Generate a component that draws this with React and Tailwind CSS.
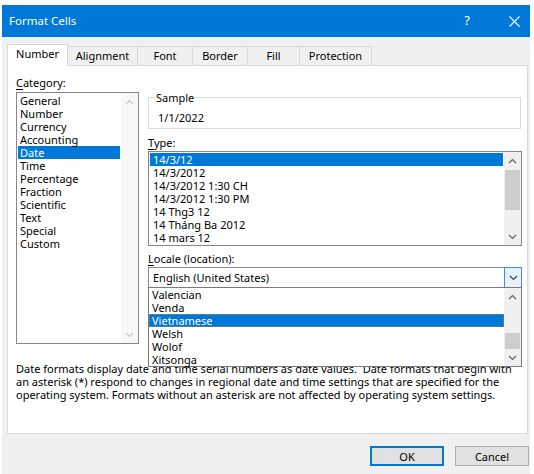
import React from "react";

function Chev({ dir = "up", color = "#606060" }) {
  return (
    <svg width="9" height="6" viewBox="0 0 9 6" className="block">
      <path
        d={dir === "up" ? "M1 5L4.5 1.5L8 5" : "M1 1L4.5 4.5L8 1"}
        fill="none"
        stroke={color}
        strokeWidth="1.2"
      />
    </svg>
  );
}

function ArrowBtn({ dir, color }) {
  return (
    <div className="h-[17px] flex items-center justify-center shrink-0">
      <Chev dir={dir} color={color} />
    </div>
  );
}

function Row({ children, selected, focus }) {
  return (
    <div
      className={
        "h-[13px] leading-[13px] pl-[3px] whitespace-nowrap " +
        (selected ? "bg-[#0078d7] text-white " : "") +
        (focus ? "outline-1 outline-dotted outline-[#b08040] -outline-offset-1" : "")
      }
    >
      {children}
    </div>
  );
}

const categories = [
  "General",
  "Number",
  "Currency",
  "Accounting",
  "Date",
  "Time",
  "Percentage",
  "Fraction",
  "Scientific",
  "Text",
  "Special",
  "Custom",
];

const types = [
  "14/3/12",
  "14/3/2012",
  "14/3/2012 1:30 CH",
  "14/3/2012 1:30 PM",
  "14 Thg3 12",
  "14 Tháng Ba 2012",
  "14 mars 12",
];

const locales = ["Valencian", "Venda", "Vietnamese", "Welsh", "Wolof", "Xitsonga"];

const tabs = [
  ["Alignment", "w-[70px]"],
  ["Font", "w-[55px]"],
  ["Border", "w-[55px]"],
  ["Fill", "w-[52px]"],
  ["Protection", "w-[72px]"],
];

export default function App() {
  return (
    <div className="w-[534px] h-[474px] bg-white pt-[5px] pl-[2px] overflow-hidden font-['Noto_Sans',sans-serif] text-[11px] text-black">
      <div className="w-[528px] h-[469px] bg-[#f0f0f0] flex flex-col">
        {/* Title bar */}
        <div className="h-[32px] bg-[#0078d7] flex items-center text-white shrink-0">
          <span className="pl-[7px] text-[11.5px] flex-1">Format Cells</span>
          <span className="w-[20px] text-center text-[13px] mr-[27px]">?</span>
          <span className="w-[20px] flex justify-center mr-[6px]">
            <svg width="11" height="11" viewBox="0 0 11 11">
              <path d="M0.5 0.5L10.5 10.5M10.5 0.5L0.5 10.5" stroke="white" strokeWidth="1.1" />
            </svg>
          </span>
        </div>

        {/* Tabs */}
        <div className="mt-[7px] pl-[5px] flex items-end h-[21px] shrink-0">
          <div className="relative z-10 h-[22px] -mb-px w-[61px] bg-white border border-b-0 border-[#d9d9d9] flex items-center justify-center pb-[2px]">
            Number
          </div>
          {tabs.map(([t, w]) => (
            <div
              key={t}
              className={
                w +
                " h-[19px] bg-[#f0f0f0] border-t border-r border-[#d9d9d9] flex items-center justify-center"
              }
            >
              {t}
            </div>
          ))}
        </div>

        {/* Panel */}
        <div className="ml-[5px] w-[521px] h-[369px] bg-white border border-[#d9d9d9] pt-[10px] pl-[8px] shrink-0">
          <div className="flex">
            {/* Left column */}
            <div className="w-[123px]">
              <div className="h-[13px] leading-[13px]">
                <span className="underline underline-offset-[2px]">C</span>ategory:
              </div>
              <div className="mt-[3px] h-[252px] border border-[#828790] flex">
                <div className="flex-1 p-px">
                  {categories.map((c) => (
                    <div
                      key={c}
                      className={
                        "h-[13px] leading-[13px] pl-[2px] " +
                        (c === "Date" ? "bg-[#0078d7] text-white" : "")
                      }
                    >
                      {c}
                    </div>
                  ))}
                </div>
                <div className="w-[17px] bg-[#f7f7f7] flex flex-col justify-between">
                  <ArrowBtn dir="up" color="#c8c8c8" />
                  <ArrowBtn dir="down" color="#c8c8c8" />
                </div>
              </div>
            </div>

            {/* Right column */}
            <div className="ml-[9px] w-[374px]">
              {/* Sample */}
              <div className="relative mt-[21px] h-[32px] w-[373px] border border-[#dcdcdc] pt-[13px] pl-[9px] leading-[13px]">
                <span className="absolute -top-[7px] left-[6px] bg-white px-[1px] leading-[13px]">
                  Sample
                </span>
                1/1/2022
              </div>

              {/* Type */}
              <div className="mt-[7px] h-[13px] leading-[13px]">
                <span className="underline underline-offset-[2px]">T</span>ype:
              </div>
              <div className="mt-[2px] h-[95px] border border-[#828790] flex">
                <div className="flex-1 p-px">
                  {types.map((t, i) => (
                    <Row key={t} selected={i === 0}>
                      {t}
                    </Row>
                  ))}
                </div>
                <div className="w-[17px] bg-[#f0f0f0] flex flex-col">
                  <ArrowBtn dir="up" />
                  <div className="flex-1 flex flex-col">
                    <div className="mt-[1px] h-[40px] mx-px bg-[#cdcdcd]" />
                  </div>
                  <ArrowBtn dir="down" />
                </div>
              </div>

              {/* Locale */}
              <div className="mt-[6px] h-[13px] leading-[13px]">
                <span className="underline underline-offset-[2px]">L</span>ocale (location):
              </div>
              <div className="relative mt-[2px]">
                <div className="h-[21px] border border-[#8c8c8c] flex items-stretch">
                  <div className="flex-1 pl-[4px] flex items-center leading-[13px]">
                    English (United States)
                  </div>
                  <div className="w-[18px] -my-px -mr-px bg-[#e5f1fb] border border-[#3c8ed6] flex items-center justify-center">
                    <Chev dir="down" color="#404040" />
                  </div>
                </div>
                {/* Dropdown list overlay */}
                <div className="absolute z-10 left-0 top-[20px] w-[374px] h-[80px] bg-white border border-[#7a7a7a] flex">
                  <div className="flex-1">
                    {locales.map((l) => (
                      <Row key={l} selected={l === "Vietnamese"} focus={l === "Vietnamese"}>
                        {l}
                      </Row>
                    ))}
                  </div>
                  <div className="w-[17px] bg-[#f0f0f0] flex flex-col">
                    <ArrowBtn dir="up" />
                    <div className="flex-1 flex flex-col justify-end">
                      <div className="h-[16px] mx-px bg-[#cdcdcd]" />
                    </div>
                    <ArrowBtn dir="down" />
                  </div>
                </div>
              </div>
            </div>
          </div>

          {/* Description */}
          <div className="mt-[18px] leading-[13px] whitespace-pre">
            <div>Date formats display date and time serial numbers as date values.  Date formats that begin with</div>
            <div>an asterisk (*) respond to changes in regional date and time settings that are specified for the</div>
            <div>operating system. Formats without an asterisk are not affected by operating system settings.</div>
          </div>
        </div>

        {/* Buttons */}
        <div className="mt-[12px] flex justify-end gap-[11px] pr-[1px]">
          <button className="w-[74px] h-[20px] bg-[#e1e1e1] border-2 border-[#0078d7] flex items-center justify-center leading-none">
            OK
          </button>
          <button className="w-[74px] h-[20px] bg-[#e1e1e1] border border-[#adadad] flex items-center justify-center leading-none">
            Cancel
          </button>
        </div>
      </div>
    </div>
  );
}
